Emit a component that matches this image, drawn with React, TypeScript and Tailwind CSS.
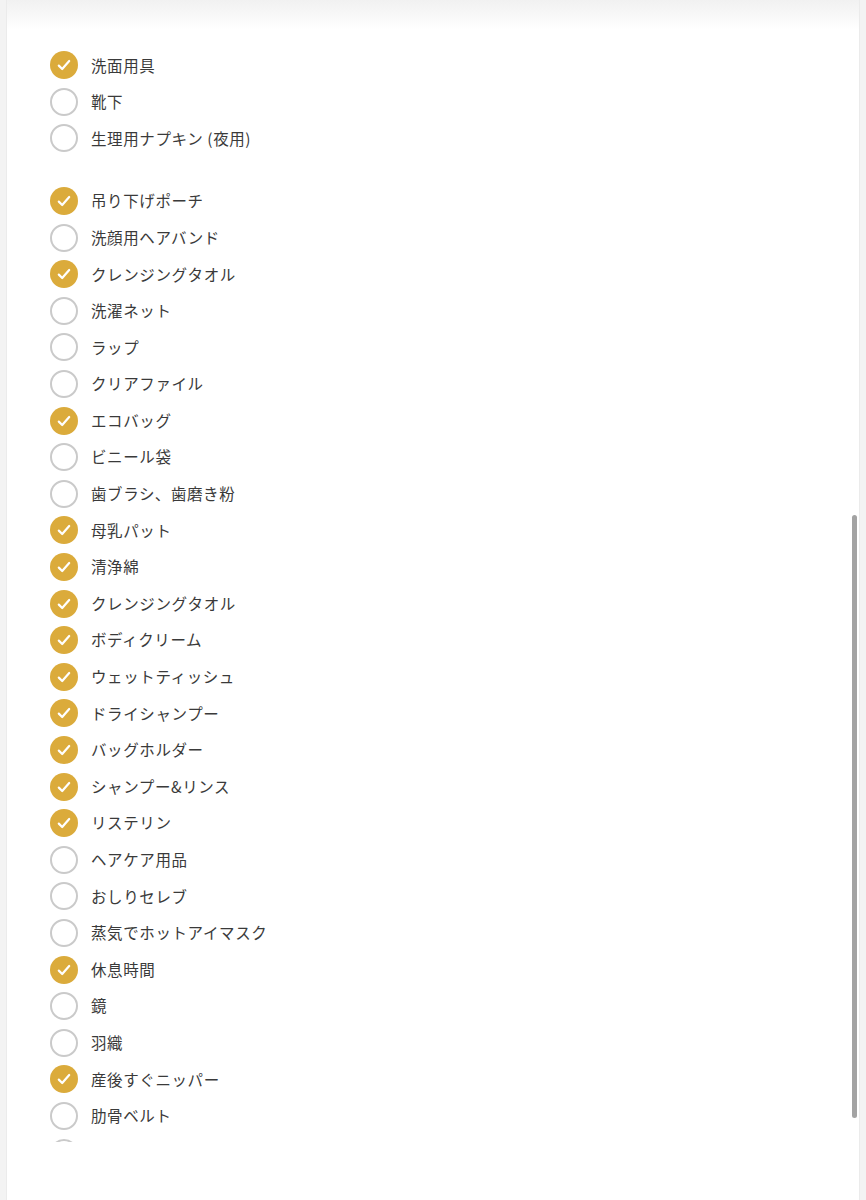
import React from 'react'

type Item = {
    label: string
    checked: boolean
}

const groupA: Item[] = [
    { label: '洗面用具', checked: true },
    { label: '靴下', checked: false },
    { label: '生理用ナプキン (夜用)', checked: false },
]

const groupB: Item[] = [
    { label: '吊り下げポーチ', checked: true },
    { label: '洗顔用ヘアバンド', checked: false },
    { label: 'クレンジングタオル', checked: true },
    { label: '洗濯ネット', checked: false },
    { label: 'ラップ', checked: false },
    { label: 'クリアファイル', checked: false },
    { label: 'エコバッグ', checked: true },
    { label: 'ビニール袋', checked: false },
    { label: '歯ブラシ、歯磨き粉', checked: false },
    { label: '母乳パット', checked: true },
    { label: '清浄綿', checked: true },
    { label: 'クレンジングタオル', checked: true },
    { label: 'ボディクリーム', checked: true },
    { label: 'ウェットティッシュ', checked: true },
    { label: 'ドライシャンプー', checked: true },
    { label: 'バッグホルダー', checked: true },
    { label: 'シャンプー&リンス', checked: true },
    { label: 'リステリン', checked: true },
    { label: 'ヘアケア用品', checked: false },
    { label: 'おしりセレブ', checked: false },
    { label: '蒸気でホットアイマスク', checked: false },
    { label: '休息時間', checked: true },
    { label: '鏡', checked: false },
    { label: '羽織', checked: false },
    { label: '産後すぐニッパー', checked: true },
    { label: '肋骨ベルト', checked: false },
    // next row is scrolled out of view, only the top of its circle shows
    { label: '', checked: false },
]

function CheckRow({ item }: { item: Item }) {
    return (
        <li className="flex items-center h-[36.6px] pl-[43px]">
            {item.checked ? (
                <span className="w-[28px] h-[28px] rounded-full bg-[#dbab3b] flex items-center justify-center shrink-0">
                    <svg className="w-[16px] h-[16px]" viewBox="0 0 16 16" fill="none" stroke="white" strokeWidth={2.2} strokeLinecap="round" strokeLinejoin="round">
                        <path d="M2.8 8.6l3.4 3.4L13.2 4" />
                    </svg>
                </span>
            ) : (
                <span className="w-[28px] h-[28px] rounded-full border-2 border-[#cacaca] bg-white shrink-0" />
            )}
            {item.label && (
                <span className="ml-[13px] text-[15.5px] tracking-[0.6px] text-[#3a3a3a] leading-none">{item.label}</span>
            )}
        </li>
    )
}

export default function App() {
    return (
        <div
            className="min-h-screen bg-[#f3f3f3] px-[6px]"
            style={{ fontFamily: '"Noto Sans CJK JP", "Noto Sans", sans-serif' }}
        >
            <div className="relative bg-white h-[1200px] border-x border-[#ebebeb]">
                {/* header shadow */}
                <div className="h-[30px] bg-gradient-to-b from-[#f1f1f1] to-white" />

                {/* list area */}
                <div className="h-[1112px] overflow-hidden pt-[17px]">
                    <ul>
                        {groupA.map((item, i) => (
                            <CheckRow key={'a' + i} item={item} />
                        ))}
                    </ul>
                    <ul className="mt-[26px]">
                        {groupB.map((item, i) => (
                            <CheckRow key={'b' + i} item={item} />
                        ))}
                    </ul>
                </div>

                {/* scrollbar thumb */}
                <div className="absolute right-[2px] top-[515px] w-[5px] h-[603px] rounded-full bg-[#a3a3a3]" />
            </div>
        </div>
    )
}
